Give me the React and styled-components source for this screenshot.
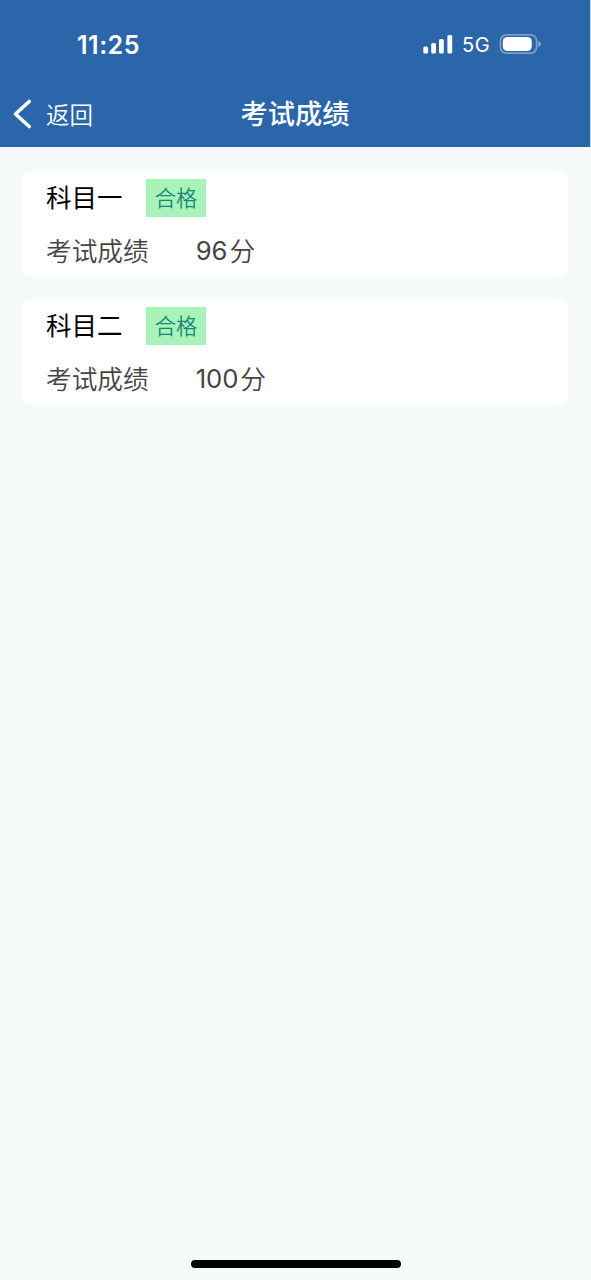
import React from "react";
import styled, { createGlobalStyle } from "styled-components";

const GlobalStyle = createGlobalStyle`
    * {
        box-sizing: border-box;
    }
    body {
        margin: 0;
        background: #f5f9fa;
        font-family: Inter, "Noto Sans CJK SC", sans-serif;
    }
`

const Screen = styled.div`
    display: flex;
    flex-direction: column;
    height: 1280px;
    width: 100%;
    overflow: hidden;
`

const Header = styled.header`
    height: 147px;
    border-right: 1px solid #c3d5e8;
    background: #2c66aa;
    background-clip: padding-box;
    color: #fff;
`

const StatusBar = styled.div`
    display: flex;
    align-items: center;
    justify-content: space-between;
    height: 88px;
    padding: 0 48px 0 77px;
`

const Time = styled.span`
    margin-top: 2px;
    font-size: 25px;
    font-weight: 600;
    line-height: 30px;
    letter-spacing: 0.5px;
`

const StatusIcons = styled.div`
    display: flex;
    align-items: center;
`

const Network = styled.span`
    margin: 1px 9px 0 8px;
    font-size: 20px;
    line-height: 24px;
    letter-spacing: 0.4px;
`

const NavBar = styled.nav`
    display: grid;
    grid-template-columns: 1fr auto 1fr;
    align-items: center;
    height: 52px;
    padding: 0 13px;
`

const BackButton = styled.button`
    display: flex;
    align-items: center;
    gap: 13px;
    padding: 0;
    border: none;
    background: none;
    color: #fff;
    font-family: inherit;
    font-size: 23.5px;
    font-weight: 350;
    line-height: 34px;
`

const BackLabel = styled.span`
    padding-top: 3px;
`

const PageTitle = styled.h1`
    margin: 0;
    padding-top: 2px;
    font-size: 27.2px;
    font-weight: 500;
    line-height: 36px;
`

const Results = styled.main`
    display: flex;
    flex: 1;
    flex-direction: column;
    gap: 22px;
    padding: 24px 23px 0 22px;
`

const Card = styled.section`
    height: 106px;
    padding: 8px 24px;
    border-radius: 9px;
    background: #fff;
`

const CardHeader = styled.div`
    display: flex;
    align-items: flex-start;
    gap: 24px;
    height: 38px;
`

const Subject = styled.h2`
    width: 76px;
    margin: 0;
    color: #000;
    font-size: 25.5px;
    font-weight: 400;
    line-height: 38px;
    white-space: nowrap;
`

const Badge = styled.span`
    width: 60px;
    height: 37.5px;
    background: #a8f4b8;
    color: #16877a;
    font-size: 21.3px;
    font-weight: 350;
    line-height: 38px;
    text-align: center;
`

const ScoreRow = styled.div`
    display: flex;
    align-items: center;
    gap: 47px;
    height: 38px;
    margin-top: 15px;
    color: #444;
    font-size: 25.7px;
    font-weight: 350;
    line-height: 38px;
`

const ScoreLabel = styled.span`
    padding-top: 2px;
`

const Score = styled.span`
    display: flex;
    gap: 2px;
    font-weight: 400;
    letter-spacing: -0.1px;
`

const Unit = styled.span`
    padding-top: 1px;
    font-weight: 350;
`

const HomeBar = styled.div`
    width: 210px;
    height: 8px;
    margin: 0 auto 12px;
    border-radius: 4px;
    background: #000;
`

const SignalIcon = () => (
    <svg width="31" height="20" viewBox="0 0 31 20" fill="#fff">
        <rect x="0.3" y="12.5" width="4.8" height="7" rx="1.5" />
        <rect x="8.2" y="9" width="4.8" height="10.5" rx="1.5" />
        <rect x="16" y="5" width="4.8" height="14.5" rx="1.5" />
        <rect x="24.4" y="1" width="4.8" height="18.5" rx="1.5" />
    </svg>
)

const BatteryIcon = () => (
    <svg width="43" height="20" viewBox="0 0 43 20">
        <rect x="1.4" y="0.9" width="36.2" height="18.2" rx="6" fill="none" stroke="#fff" strokeOpacity="0.38" strokeWidth="1.7" />
        <rect x="3.8" y="3" width="29" height="14" rx="4.5" fill="#fff" />
        <path d="M39.4 7 C42.4 8 42.4 12 39.4 13 Z" fill="#fff" fillOpacity="0.45" />
    </svg>
)

const BackIcon = () => (
    <svg width="20" height="30" viewBox="0 0 20 30" fill="none" stroke="#fff" strokeWidth="3.6" strokeLinecap="round" strokeLinejoin="round">
        <path d="M16.2 2.5 L2.5 15 L16.2 27.5" />
    </svg>
)

const results = [
    { subject: "科目一", status: "合格", score: 96 },
    { subject: "科目二", status: "合格", score: 100 },
]

const ResultCard = ({ subject, status, score }) => {
    return (
        <Card>
            <CardHeader>
                <Subject>{subject}</Subject>
                <Badge>{status}</Badge>
            </CardHeader>
            <ScoreRow>
                <ScoreLabel>考试成绩</ScoreLabel>
                <Score>
                    {score}
                    <Unit>分</Unit>
                </Score>
            </ScoreRow>
        </Card>
    )
}

const App = () => {
    return (
        <Screen lang="zh-CN">
            <GlobalStyle />
            <Header>
                <StatusBar>
                    <Time>11:25</Time>
                    <StatusIcons>
                        <SignalIcon />
                        <Network>5G</Network>
                        <BatteryIcon />
                    </StatusIcons>
                </StatusBar>
                <NavBar>
                    <BackButton>
                        <BackIcon />
                        <BackLabel>返回</BackLabel>
                    </BackButton>
                    <PageTitle>考试成绩</PageTitle>
                </NavBar>
            </Header>
            <Results>
                {results.map((result) => (
                    <ResultCard key={result.subject} {...result} />
                ))}
            </Results>
            <HomeBar />
        </Screen>
    )
}

export default App;
